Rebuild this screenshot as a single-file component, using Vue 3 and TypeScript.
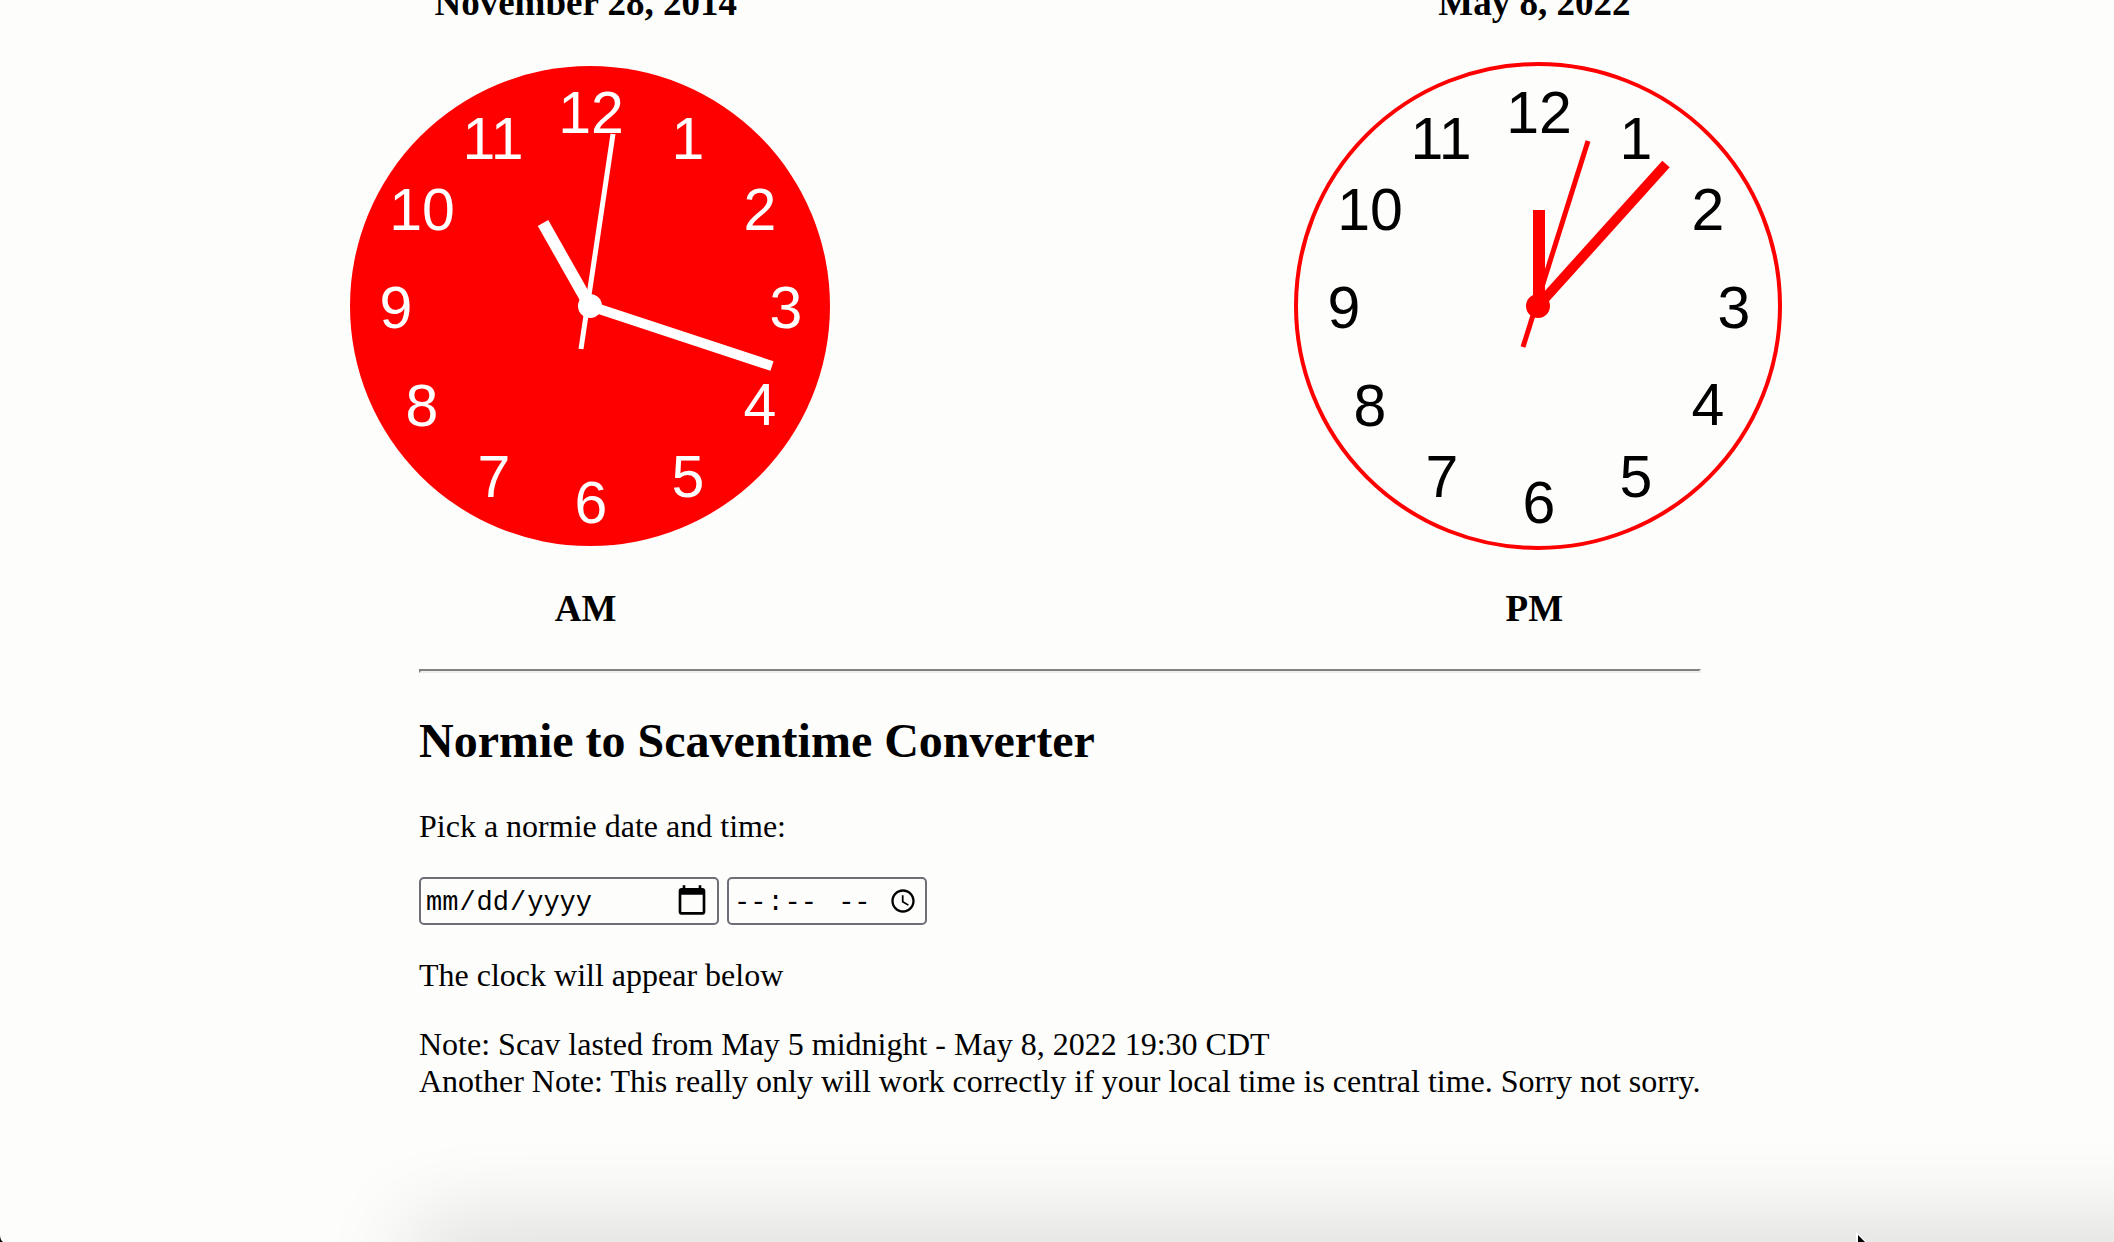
<script setup lang="ts">
import { ref } from 'vue'

interface Hand {
  x1: number
  y1: number
  x2: number
  y2: number
  width: number
}

interface Clock {
  date: string
  period: string
  theme: 'am' | 'pm'
  radius: number
  hands: Hand[]
}

/* Hand coordinates are relative to the centre of the dial. */
const clocks: Clock[] = [
  {
    date: 'November 28, 2014',
    period: 'AM',
    theme: 'am',
    radius: 240,
    hands: [
      { x1: 0, y1: 0, x2: -47, y2: -83, width: 12 },
      { x1: 0, y1: 0, x2: 182, y2: 60, width: 10 },
      { x1: -9, y1: 43, x2: 23, y2: -172, width: 5 },
    ],
  },
  {
    date: 'May 8, 2022',
    period: 'PM',
    theme: 'pm',
    radius: 242,
    hands: [
      { x1: 1, y1: 0, x2: 1, y2: -96, width: 12 },
      { x1: 0, y1: 0, x2: 128, y2: -142, width: 10 },
      { x1: -15, y1: 41, x2: 50, y2: -165, width: 5 },
    ],
  },
]

const NUMERAL_RADIUS = 195
const numerals = Array.from({ length: 12 }, (_, i) => {
  const hour = i + 1
  const angle = (hour * Math.PI) / 6
  return {
    hour,
    x: Math.round(Math.sin(angle) * NUMERAL_RADIUS) + 1,
    y: Math.round(-Math.cos(angle) * NUMERAL_RADIUS) + 22,
  }
})

const date = ref('')
const time = ref('')
</script>

<template>
  <div class="page">
    <section class="clocks">
      <article v-for="clock in clocks" :key="clock.period" class="clock" :class="clock.theme">
        <h3>{{ clock.date }}</h3>
        <svg class="dial" viewBox="-254 -250 500 500" role="img" :aria-label="clock.date + ' ' + clock.period">
          <circle class="face" :r="clock.radius" />
          <text v-for="n in numerals" :key="n.hour" class="numeral" :x="n.x" :y="n.y">{{ n.hour }}</text>
          <line
            v-for="(hand, i) in clock.hands"
            :key="i"
            class="hand"
            :x1="hand.x1"
            :y1="hand.y1"
            :x2="hand.x2"
            :y2="hand.y2"
            :stroke-width="hand.width"
          />
          <circle class="hub" r="12" />
        </svg>
        <h3>{{ clock.period }}</h3>
      </article>
    </section>

    <main class="converter">
      <hr />
      <h2>Normie to Scaventime Converter</h2>
      <p id="prompt">Pick a normie date and time:</p>
      <form class="fields" aria-labelledby="prompt" @submit.prevent>
        <input v-model="date" class="date" type="date" aria-label="Date" />
        <input v-model="time" class="time" type="time" aria-label="Time" />
      </form>
      <p>The clock will appear below</p>
      <p>
        Note: Scav lasted from May 5 midnight - May 8, 2022 19:30 CDT<br />
        Another Note: This really only will work correctly if your local time is central time. Sorry not sorry.
      </p>
    </main>

    <div class="shade" aria-hidden="true"></div>
    <svg class="corner" viewBox="0 0 3 7" aria-hidden="true"><path d="M0 0 Q0 5 3 7 H0Z" /></svg>
    <svg class="pointer" viewBox="0 0 12 10" aria-hidden="true">
      <path d="M1 0 L12 10 H1Z" fill="#fff" />
      <path d="M3 3 L10 10 H3Z" fill="#000" />
    </svg>
  </div>
</template>

<style>
body {
  margin: 0;
  background: #fdfdfc;
}
</style>

<style scoped>
.page {
  position: relative;
  box-sizing: border-box;
  min-height: 100vh;
  padding-left: 6px;
  overflow: hidden;
  color: #000;
  font-family: 'Liberation Serif', 'Times New Roman', serif;
  font-size: 32px;
  line-height: 37px;
}

.clocks {
  display: grid;
  grid-template-columns: 1fr 1fr;
  margin-top: -18px;
  padding: 0 5%;
}

.clock {
  display: flex;
  flex-direction: column;
  align-items: center;
  gap: 32px;
}

h3 {
  margin: 0;
  font-size: 37px;
  line-height: 42px;
}

.dial {
  display: block;
  width: 100%;
  max-width: 500px;
}

.numeral {
  font-family: 'Liberation Sans', Arial, sans-serif;
  font-size: 59px;
  text-anchor: middle;
}

.am .face {
  fill: #f00;
}

.am .numeral,
.am .hub {
  fill: #fff;
}

.am .hand {
  stroke: #fff;
}

.pm .face {
  fill: none;
  stroke: #f00;
  stroke-width: 4;
}

.pm .hand {
  stroke: #f00;
}

.pm .hub {
  fill: #f00;
}

.converter {
  max-width: 1282px;
  margin: 0 auto;
}

hr {
  margin: 39px 0 40px;
  border: solid;
  border-width: 2px;
  border-color: #808080 #eee #eee #808080;
}

h2 {
  margin: 0 0 40px;
  font-size: 48px;
  line-height: 55px;
}

p {
  margin: 0 0 32px;
}

.fields {
  display: flex;
  flex-wrap: wrap;
  gap: 8px;
  margin-bottom: 32px;
}

input {
  box-sizing: border-box;
  height: 48px;
  margin: 0;
  padding: 4px 4px 0;
  border: 2px solid #6e6e78;
  border-radius: 5px;
  background: transparent;
  color: #000;
  font-family: 'Liberation Mono', 'Courier New', monospace;
  font-size: 27px;
}

input::-webkit-datetime-edit-month-field,
input::-webkit-datetime-edit-day-field,
input::-webkit-datetime-edit-year-field,
input::-webkit-datetime-edit-hour-field,
input::-webkit-datetime-edit-minute-field {
  padding: 0 1px;
}

input::-webkit-datetime-edit-ampm-field {
  padding: 0 1px 0 12px;
}

input::-webkit-calendar-picker-indicator {
  padding: 0;
  margin-right: 4px;
  margin-bottom: 4px;
  background-size: contain;
}

.date {
  width: 300px;
}

.date::-webkit-calendar-picker-indicator {
  width: 34px;
  height: 34px;
}

.time {
  width: 200px;
}

.time::-webkit-calendar-picker-indicator {
  width: 28px;
  height: 28px;
}

.shade {
  position: absolute;
  top: 100%;
  right: -200px;
  left: 420px;
  height: 40px;
  border-radius: 40px;
  box-shadow: 0 0 90px 14px rgba(0, 0, 0, 0.16);
}

.corner {
  position: absolute;
  bottom: 0;
  left: 0;
  width: 3px;
  height: 7px;
}

.pointer {
  position: absolute;
  right: calc(12% - 7px);
  bottom: 0;
  width: 12px;
  height: 10px;
}
</style>
